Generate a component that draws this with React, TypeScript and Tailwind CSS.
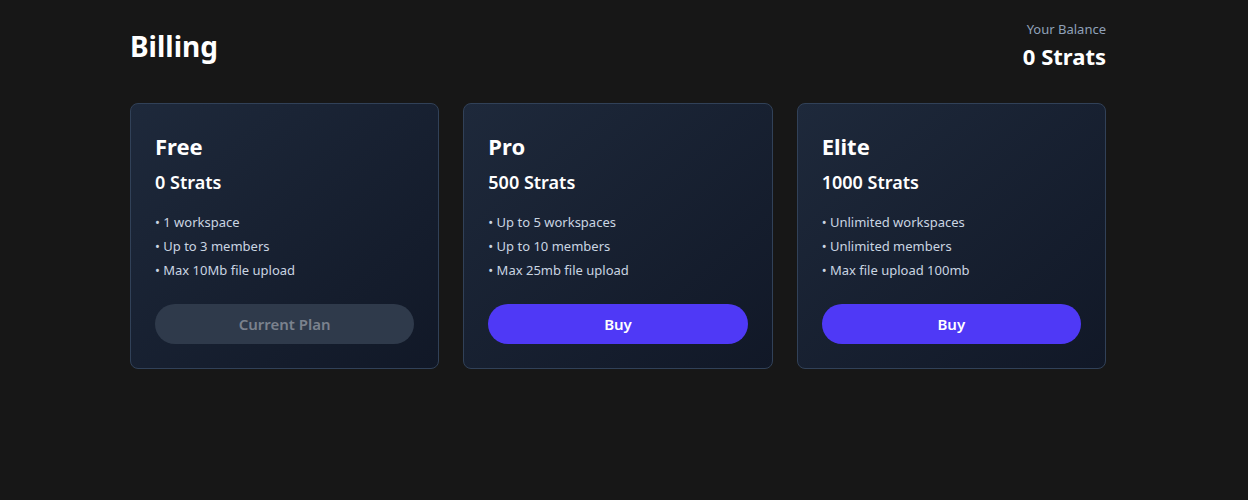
const plans = [
  {
    name: "Free",
    price: "0 Strats",
    features: ["1 workspace", "Up to 3 members", "Max 10Mb file upload"],
    current: true,
  },
  {
    name: "Pro",
    price: "500 Strats",
    features: ["Up to 5 workspaces", "Up to 10 members", "Max 25mb file upload"],
    current: false,
  },
  {
    name: "Elite",
    price: "1000 Strats",
    features: ["Unlimited workspaces", "Unlimited members", "Max file upload 100mb"],
    current: false,
  },
];

export default function App() {
  return (
    <main
      className="min-h-[500px] bg-[#171717] text-white"
      style={{ fontFamily: '"Noto Sans", "Open Sans", sans-serif' }}
    >
      <div className="ml-[130px] w-[976px] pt-[18px]">
        {/* Header */}
        <div className="flex items-start justify-between">
          <h1 className="mt-[8px] text-[28px] font-bold leading-[40px]">Billing</h1>
          <div className="text-right">
            <p className="mt-[1px] text-[13px] leading-[20px] text-slate-400">Your Balance</p>
            <p className="mt-[2px] text-[22px] font-bold leading-[30px]">0 Strats</p>
          </div>
        </div>

        {/* Plans */}
        <div className="mt-[32px] grid grid-cols-3 gap-6">
          {plans.map((plan) => (
            <div
              key={plan.name}
              className="rounded-lg border border-slate-700 bg-gradient-to-br from-[#1e293b] to-[#111827] p-6"
            >
              <h2 className="text-[22px] font-bold leading-[36px]">{plan.name}</h2>
              <p className="mt-[4px] text-[18px] font-semibold leading-[28px]">{plan.price}</p>
              <ul className="mt-[14px] text-[13px] leading-[24px] text-slate-300">
                {plan.features.map((f) => (
                  <li key={f}>• {f}</li>
                ))}
              </ul>
              <button
                className={
                  plan.current
                    ? "mt-[22px] h-10 w-full rounded-full bg-[#2f3a4b] text-[15px] font-semibold text-[#7b828e]"
                    : "mt-[22px] h-10 w-full rounded-full bg-indigo-600 text-[15px] font-semibold text-white"
                }
              >
                {plan.current ? "Current Plan" : "Buy"}
              </button>
            </div>
          ))}
        </div>
      </div>
    </main>
  );
}
